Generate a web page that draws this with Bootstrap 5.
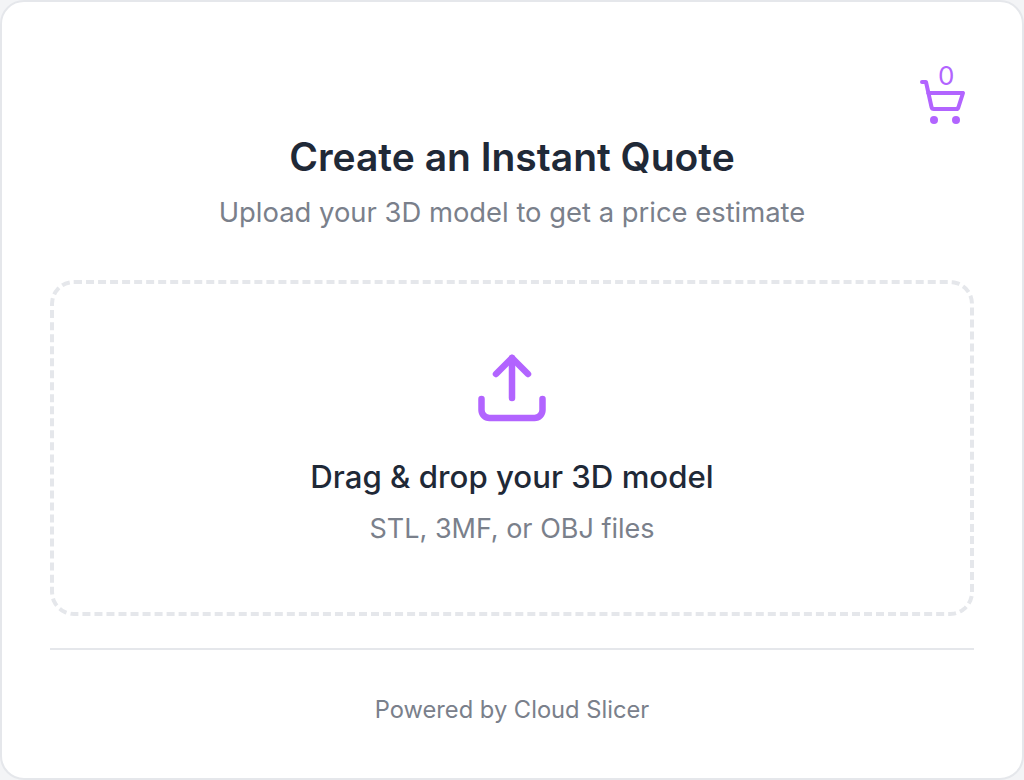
<!DOCTYPE html>
<html lang="en">
<head>
    <meta charset="UTF-8">
    <meta name="viewport" content="width=device-width, initial-scale=1.0">
    <title>Instant Quote</title>
    <link href="https://cdn.jsdelivr.net/npm/bootstrap@5.3.0/dist/css/bootstrap.min.css" rel="stylesheet">
    <style>
        html, body {
            height: 780px;
            overflow: hidden;
            background-color: #f3f4f6;
        }
        body {
            font-family: Inter, "Liberation Sans", sans-serif;
        }
        .quote-panel {
            height: 780px;
            background-color: #fff;
            border: 2px solid #e5e7eb;
            border-radius: 24px;
            padding: 48px 48px 0;
        }
        .cart-row {
            height: 78px;
            padding-right: 8px;
        }
        .cart-link {
            width: 46px;
            height: 62px;
            margin-top: 14px;
            color: #b264ff;
        }
        .cart-count {
            top: 0;
            left: 18px;
            font-size: 26px;
            line-height: 24px;
        }
        .quote-title {
            font-size: 39px;
            line-height: 58px;
            font-weight: 600;
            color: #1f2937;
        }
        .quote-sub {
            font-size: 27.400px;
            line-height: 40px;
            color: #7a808b;
            margin-top: 6px;
        }
        .drop-area {
            height: 336px;
            margin-top: 48px;
            border: 4px dashed #e5e7eb;
            border-radius: 24px;
            padding-top: 70px;
        }
        .drop-icon {
            display: block;
            color: #b264ff;
        }
        .drop-title {
            font-size: 31.200px;
            line-height: 44px;
            font-weight: 500;
            color: #1f2937;
            margin-top: 33px;
        }
        .drop-sub {
            font-size: 27px;
            line-height: 40px;
            color: #7a808b;
            margin-top: 10px;
        }
        .quote-foot {
            margin-top: 32px;
            padding-top: 42px;
            border-top: 2px solid #e5e7eb;
            font-size: 23.700px;
            line-height: 36px;
            color: #7a808b;
        }
    </style>
</head>
<body>
    <div class="quote-panel">
        <div class="cart-row d-flex justify-content-end">
            <a class="cart-link d-block position-relative text-decoration-none" href="#" aria-label="Cart">
                <span class="cart-count position-absolute">0</span>
                <svg class="position-absolute bottom-0 start-0" width="46" height="46" viewBox="0 0 46 46" fill="none" stroke="currentColor" stroke-width="4" stroke-linecap="round" stroke-linejoin="round">
                    <path d="M2 2h4l5.500 25a2.500 2.500 0 0 0 2.500 2h22a2.500 2.500 0 0 0 2.500-2L43 13H8"/>
                    <circle cx="14" cy="40" r="4" fill="currentColor" stroke="none"/>
                    <circle cx="36" cy="40" r="4" fill="currentColor" stroke="none"/>
                </svg>
            </a>
        </div>
        <h1 class="quote-title text-center mb-0">Create an Instant Quote</h1>
        <p class="quote-sub text-center mb-0">Upload your 3D model to get a price estimate</p>
        <div class="drop-area text-center">
            <svg class="drop-icon mx-auto" width="68" height="68" viewBox="0 0 68 68" fill="none" stroke="currentColor" stroke-width="6.500" stroke-linecap="round" stroke-linejoin="round">
                <path d="M34 44V4"/>
                <path d="M18 20L34 4l16 16"/>
                <path d="M3.500 45v11a8 8 0 0 0 8 8h45a8 8 0 0 0 8-8V45"/>
            </svg>
            <div class="drop-title">Drag &amp; drop your 3D model</div>
            <div class="drop-sub">STL, 3MF, or OBJ files</div>
        </div>
        <div class="quote-foot text-center">Powered by Cloud Slicer</div>
    </div>
    <script src="https://cdn.jsdelivr.net/npm/bootstrap@5.3.0/dist/js/bootstrap.bundle.min.js"></script>
</body>
</html>
